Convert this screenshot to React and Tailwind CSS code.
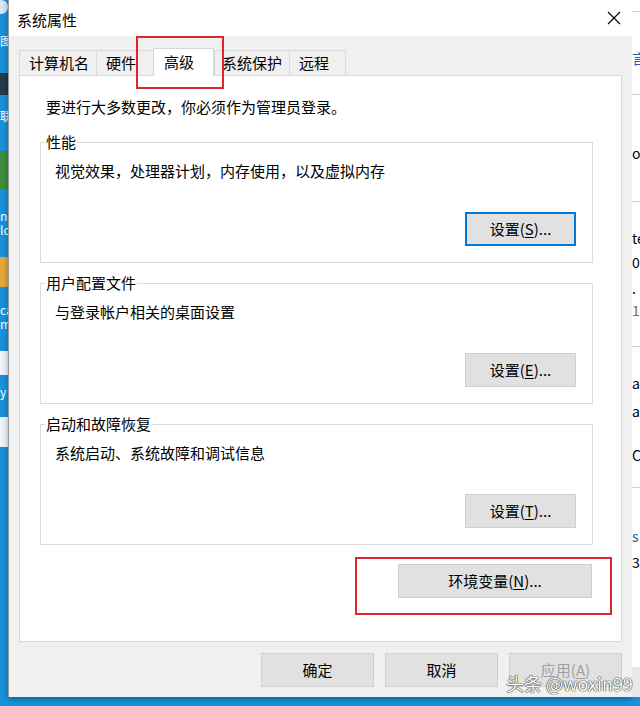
import React from 'react';

const FONT = "font-['Noto_Sans_CJK_SC','Noto_Sans',sans-serif]";

function WinButton({ label, mnemonic, suffix = '...', className = '', focused = false, disabled = false }) {
  return (
    <div
      className={`flex items-center justify-center h-[34px] bg-[#e1e1e1] text-[15px] leading-[20px] ${
        focused ? 'border-2 border-[#0078d7]' : 'border border-[#d0d0d0]'
      } ${disabled ? 'text-[#a0a0a0] bg-[#cccccc]' : 'text-black'} ${className}`}
    >
      {label}
      {mnemonic && (
        <span>
          (<span className="underline underline-offset-2">{mnemonic}</span>){suffix}
        </span>
      )}
    </div>
  );
}

function GroupBox({ title, desc, children }) {
  return (
    <div className="flex flex-col h-[121px] border border-[#dcdcdc]">
      <span className="-mt-[11px] ml-[4px] w-fit bg-white px-px leading-[20px]">{title}</span>
      <p className="mt-[9px] pl-[14px] leading-[20px]">{desc}</p>
      <div className="mt-auto mb-[16px] mr-[16px] self-end">{children}</div>
    </div>
  );
}

const TABS = [
  { name: '计算机名', w: 'w-[77px]', pl: 'pl-[9px]' },
  { name: '硬件', w: 'w-[57px]', pl: 'pl-[9px]' },
  { name: '高级', w: 'w-[61px]', pl: 'pl-[10px]', active: true },
  { name: '系统保护', w: 'w-[75px]', pl: 'pl-[7px]' },
  { name: '远程', w: 'w-[57px]', pl: 'pl-[9px]' },
];

export default function App() {
  return (
    <div className={`relative w-[640px] h-[706px] overflow-hidden bg-[#1793dc] text-black ${FONT}`}>
      <div className="flex h-[697px]">
        {/* desktop strip on the left */}
        <div className="w-[8px] shrink-0 flex flex-col overflow-hidden text-white text-[12px] leading-[14px]">
          <div className="h-[14px] bg-[#d8e9f5] rounded-r-full" />
          <div className="mt-[20px]">图</div>
          <div className="mt-[25px] h-[22px] bg-[#243c4a]" />
          <div className="mt-[14px]">联</div>
          <div className="mt-[28px] h-[38px] bg-[#3b8f3a]" />
          <div className="mt-[20px]">ne</div>
          <div>lc</div>
          <div className="mt-[20px] h-[30px] bg-[#e3a83a]" />
          <div className="mt-[16px]">ca</div>
          <div>m</div>
          <div className="mt-[20px] h-[24px] bg-[#eef4f8]" />
          <div className="mt-[10px]">y</div>
          <div className="mt-[18px] h-[30px] bg-[#eef4f8]" />
        </div>

        {/* dialog */}
        <div className="w-[624px] shrink-0 flex flex-col bg-[#f0f0f0] border-l border-[#9a9a9a] shadow-[0_2px_6px_rgba(0,0,0,0.35)]">
          <div className="flex items-center justify-between h-[36px] bg-white pl-[8px] pr-[10px]">
            <span className="text-[15px] leading-[20px] pt-[3px]">系统属性</span>
            <svg width="14" height="14" viewBox="0 0 14 14" className="mr-[1px]">
              <path d="M1 1 L13 13 M13 1 L1 13" stroke="#000" strokeWidth="1.1" />
            </svg>
          </div>

          <div className="px-[10px] pt-[12px] flex flex-col">
            {/* tabs */}
            <div className="flex items-end h-[27px] text-[15px] leading-[20px]">
              {TABS.map((t) =>
                t.active ? (
                  <div
                    key={t.name}
                    className={`${t.w} ${t.pl} h-[28px] -mb-px relative z-10 bg-white border border-b-0 border-[#d9d9d9] pt-[3px]`}
                  >
                    {t.name}
                  </div>
                ) : (
                  <div
                    key={t.name}
                    className={`${t.w} ${t.pl} h-[25px] bg-[#f0f0f0] border border-b-0 border-r-0 border-[#d9d9d9] pt-[2px] last:border-r`}
                  >
                    {t.name}
                  </div>
                )
              )}
            </div>

            {/* panel */}
            <div className="h-[567px] bg-white border border-[#d9d9d9] pl-[20px] pr-[28px] pt-[21px] text-[15px] leading-[20px] flex flex-col">
              <p className="pl-[6px]">要进行大多数更改，你必须作为管理员登录。</p>
              <div className="mt-[25px] flex flex-col gap-[20px]">
                <GroupBox title="性能" desc="视觉效果，处理器计划，内存使用，以及虚拟内存">
                  <WinButton label="设置" mnemonic="S" focused className="w-[111px]" />
                </GroupBox>
                <GroupBox title="用户配置文件" desc="与登录帐户相关的桌面设置">
                  <WinButton label="设置" mnemonic="E" className="w-[111px]" />
                </GroupBox>
                <GroupBox title="启动和故障恢复" desc="系统启动、系统故障和调试信息">
                  <WinButton label="设置" mnemonic="T" className="w-[111px]" />
                </GroupBox>
              </div>
              <div className="mt-[19px] self-end mr-px">
                <WinButton label="环境变量" mnemonic="N" className="w-[194px]" />
              </div>
            </div>
          </div>

          <div className="flex justify-end gap-[11px] px-[10px] pt-[11px]">
            <WinButton label="确定" className="w-[113px]" />
            <WinButton label="取消" className="w-[113px]" />
            <WinButton label="应用" mnemonic="A" suffix="" disabled className="w-[113px]" />
          </div>
        </div>

        {/* background window on the right */}
        <div className="w-[8px] shrink-0 flex flex-col overflow-hidden bg-white text-[14px] leading-[16px] whitespace-nowrap">
          <div className="mt-[11px] border-t border-[#d0d0d0]" />
          <div className="mt-[38px] text-[#1f5fae]">言</div>
          <div className="mt-[28px] border-t border-[#d0d0d0]" />
          <div className="mt-[50px]">or</div>
          <div className="mt-[40px] border-t border-[#d0d0d0]" />
          <div className="mt-[28px]">te</div>
          <div className="mt-[8px]">0(</div>
          <div className="mt-[10px]">.·</div>
          <div className="mt-[6px] text-[#8a6a2a]">1</div>
          <div className="mt-[28px] border-t border-[#d0d0d0]" />
          <div className="mt-[28px]">ar</div>
          <div className="mt-[12px]">ar</div>
          <div className="mt-[28px]">C</div>
          <div className="mt-[24px] border-t border-[#d0d0d0]" />
          <div className="mt-[40px] text-[#1f5fae]">s</div>
          <div className="mt-[10px]">3-</div>
          <div className="mt-auto h-[30px] bg-[#e8e8e8]" />
        </div>
      </div>

      {/* annotation rectangles */}
      <div className="absolute left-[136px] top-[36px] w-[88px] h-[53px] border-2 border-[#e0262b]" />
      <div className="absolute left-[355px] top-[557px] w-[257px] h-[58px] border-2 border-[#e0262b]" />

      {/* watermark */}
      <div className="absolute left-[506px] top-[671px] text-[18px] leading-[24px] text-white [text-shadow:0_0_1px_#333,0_0_1px_#333,0_0_1px_#333]">
        头条 @woxin99
      </div>
    </div>
  );
}
